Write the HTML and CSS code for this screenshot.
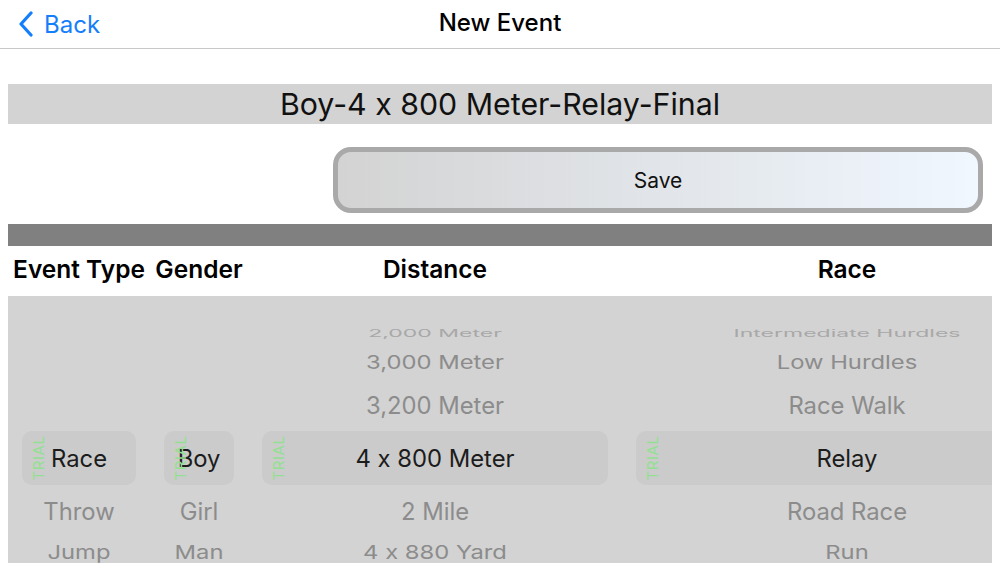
FILE: index.html
```html
<!DOCTYPE html>
<html>
<head>
<meta charset="utf-8">
<link rel="stylesheet" href="styles.css">
</head>
<body>
<header class="nav">
  <a class="back">
    <svg class="chev" width="16" height="26" viewBox="0 0 16 26"><polyline points="13,2 3,13 13,24" fill="none" stroke="#157efb" stroke-width="3.2" stroke-linecap="round" stroke-linejoin="round"/></svg>
    <span>Back</span>
  </a>
  <div class="nav-title">New Event</div>
</header>
<main class="main">
  <div class="title">Boy-4 x 800 Meter-Relay-Final</div>
  <div class="save-row"><button class="save">Save</button></div>
  <div class="divider"></div>
  <div class="cols heads">
    <div class="c1">Event Type</div>
    <div class="c2">Gender</div>
    <div class="c3">Distance</div>
    <div class="c4">Race</div>
  </div>
  <div class="picker">
    <div class="cols wheel">
      <div class="col c1">
        <div class="r r1"></div><div class="r r2"></div><div class="r r3"></div>
        <div class="r r4 sel"><span class="trial">TRIAL</span>Race</div>
        <div class="r r5">Throw</div><div class="r r6"><span>Jump</span></div>
      </div>
      <div class="col c2">
        <div class="r r1"></div><div class="r r2"></div><div class="r r3"></div>
        <div class="r r4 sel"><span class="trial">TRIAL</span>Boy</div>
        <div class="r r5">Girl</div><div class="r r6"><span>Man</span></div>
      </div>
      <div class="col c3">
        <div class="r r1"><span>2,000 Meter</span></div>
        <div class="r r2"><span>3,000 Meter</span></div>
        <div class="r r3">3,200 Meter</div>
        <div class="r r4 sel"><span class="trial">TRIAL</span>4 x 800 Meter</div>
        <div class="r r5">2 Mile</div>
        <div class="r r6"><span>4 x 880 Yard</span></div>
      </div>
      <div class="col c4">
        <div class="r r1"><span>Intermediate Hurdles</span></div>
        <div class="r r2"><span>Low Hurdles</span></div>
        <div class="r r3">Race Walk</div>
        <div class="r r4 sel"><span class="trial">TRIAL</span>Relay</div>
        <div class="r r5">Road Race</div>
        <div class="r r6"><span>Run</span></div>
      </div>
    </div>
  </div>
</main>
</body>
</html>
```
FILE: styles.css
```css
* { box-sizing: border-box; }
html, body { margin: 0; padding: 0; background: #fff; }
body { font-family: Inter, "Liberation Sans", sans-serif; font-feature-settings: "calt" 0; color: #111; width: 1000px; height: 563px; overflow: hidden; }

.nav { height: 49px; border-bottom: 1px solid #c8c8c8; display: flex; align-items: center; justify-content: center; position: relative; }
.back { position: absolute; left: 18px; top: 10px; display: flex; align-items: center; gap: 10px; color: #157efb; font-size: 24px; height: 28px; }
.nav-title { font-size: 24px; font-weight: 500; margin-top: -3px; color: #000; }

.main { padding: 35px 8px 0; }
.title { height: 40px; background: #d3d3d3; display: flex; align-items: center; justify-content: center; font-size: 30.3px; color: #111; }
.save-row { display: flex; justify-content: flex-end; padding: 23px 9px 0 0; }
.save { width: 650px; height: 66px; border: 5px solid #a9a9a9; border-radius: 18px; background: linear-gradient(to right, #d3d3d3, #f0f7ff); font-family: inherit; font-size: 21px; color: #111; padding: 0; font-feature-settings: "calt" 0; }
.divider { height: 22px; background: #808080; margin-top: 11px; }

.cols { display: flex; gap: 28px; padding-left: 14px; }
.c1 { width: 114px; flex: none; }
.c2 { width: 70px; flex: none; }
.c3 { width: 346px; flex: none; }
.c4 { width: 422px; flex: none; }
.heads { height: 50px; align-items: center; font-size: 24.5px; font-weight: 600; color: #000; }
.heads > div { text-align: center; white-space: nowrap; display: flex; justify-content: center; margin-top: -4px; }

.picker { height: 267px; background: #d3d3d3; overflow: hidden; }
.wheel { padding-top: 25px; }
.col { display: flex; flex-direction: column; }
.r { display: flex; align-items: center; justify-content: center; white-space: nowrap; color: #8c8c8c; font-size: 23.8px; }
.r1 { height: 24px; }
.r2 { height: 34px; }
.r3 { height: 52px; }
.r4 { height: 54px; }
.r5 { height: 52px; }
.r6 { height: 30px; }
.r1 span { display: inline-block; transform: scaleY(0.45); font-size: 23px; color: #a8a8a8; }
.r2 span { display: inline-block; transform: scaleY(0.78); }
.r6 span { display: inline-block; transform: scaleY(0.8); }
.sel { background: #cbcbcb; border-radius: 10px; color: #1c1c1c; position: relative; }
.trial { position: absolute; top: 50%; left: 16px; transform: translate(-50%, -50%) rotate(-90deg); font-size: 15px; color: #93e093; letter-spacing: 0.6px; }
```
